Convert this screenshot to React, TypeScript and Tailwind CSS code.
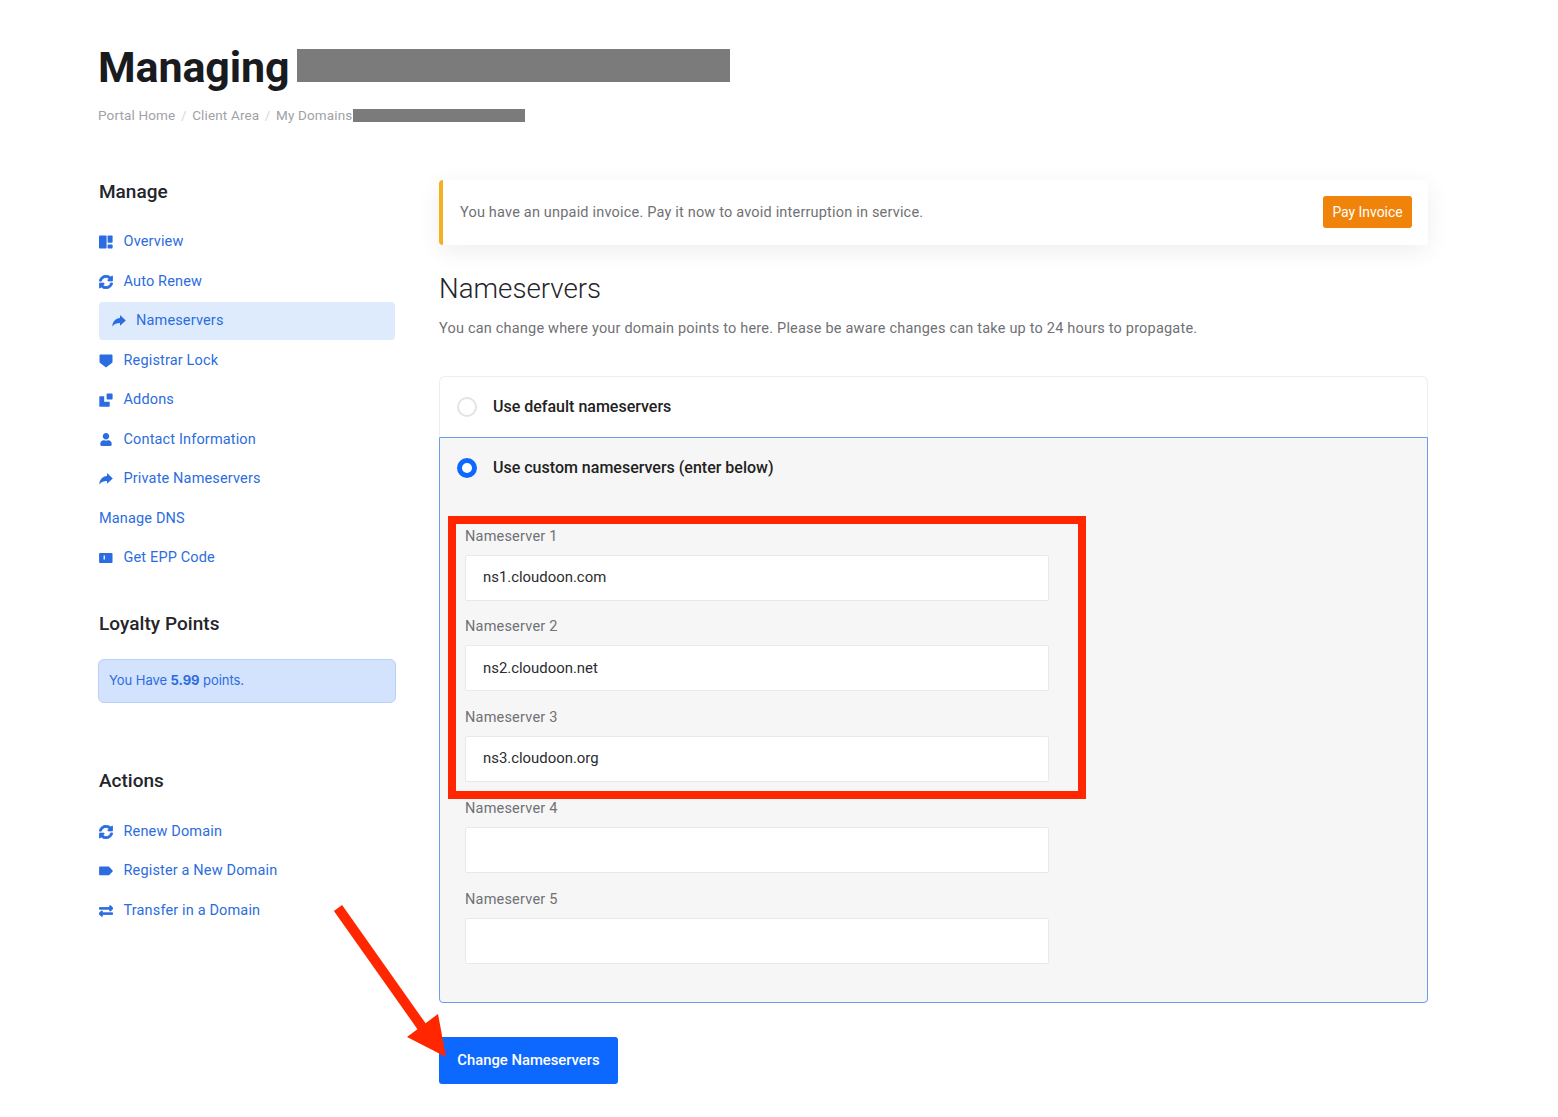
import React from "react";
import { FaSyncAlt, FaUser, FaExchangeAlt } from "react-icons/fa";

const Layout = () => (
  <svg viewBox="0 0 14 14" className="w-[14px] h-[14px]" fill="currentColor">
    <rect x="0" y="0.5" width="7.6" height="13" rx="0.8" />
    <rect x="8.6" y="0.5" width="5" height="7.2" rx="0.8" />
    <rect x="8.6" y="9.4" width="5" height="4.1" rx="0.8" />
  </svg>
);
const Share = () => (
  <svg viewBox="0 0 14 14" className="w-[14px] h-[14px]" fill="currentColor">
    <path d="M8 1 L13.8 6.4 L8 11.8 V8.9 C4.8 8.9 2.4 9.6 0.3 12.6 C0.5 7.2 3.6 4.200 8 3.900 Z" />
  </svg>
);
const Shield = () => (
  <svg viewBox="0 0 14 14" className="w-[14px] h-[14px]" fill="currentColor">
    <path d="M1.3 0.6h11.4c.5 0 .8.3.8.8v6.4c0 .5-.2.8-.6 1.1L7.3 13.3c-.2.1-.4.1-.6 0L1.1 8.9c-.4-.3-.6-.6-.6-1.1V1.4c0-.5.3-.8.8-.8z" />
  </svg>
);
const Addons = () => (
  <svg viewBox="0 0 14 14" className="w-[14px] h-[14px]" fill="currentColor">
    <path d="M.8 3.2h4.4v5.5h5.5v4.5c0 .3-.2.5-.5.5H.8c-.3 0-.5-.2-.5-.5V3.700c0-.3.2-.5.5-.5z" />
    <rect x="7.6" y="0.6" width="6" height="6" rx="0.8" />
  </svg>
);
const Card = () => (
  <svg viewBox="0 0 14 14" className="w-[14px] h-[14px]" fill="currentColor">
    <path fillRule="evenodd" d="M.8 2h12c.4 0 .7.3.7.7v8.600c0 .4-.3.7-.7.7H.8c-.4 0-.7-.3-.7-.7V2.700c0-.4.3-.7.7-.7zM4.600 4.600v3.800h1.300V4.600z" />
  </svg>
);
const Tag = () => (
  <svg viewBox="0 0 14 14" className="w-[14px] h-[14px]" fill="currentColor">
    <path d="M.8 2.600h8.800c.3 0 .5.1.7.3l3.300 3.500c.3.3.3.7 0 1l-3.300 3.500c-.2.2-.4.3-.7.3H.8c-.4 0-.7-.3-.7-.7V3.300c0-.4.3-.7.7-.7z" />
  </svg>
);

type Item = { label: string; icon?: React.ReactNode; active?: boolean };

const fa = "w-[14px] h-[14px] stroke-[30px]";
const manage: Item[] = [
  { label: "Overview", icon: <Layout /> },
  { label: "Auto Renew", icon: <FaSyncAlt className={fa} /> },
  { label: "Nameservers", icon: <Share />, active: true },
  { label: "Registrar Lock", icon: <Shield /> },
  { label: "Addons", icon: <Addons /> },
  { label: "Contact Information", icon: <FaUser className="w-[12px] h-[13px] ml-px" /> },
  { label: "Private Nameservers", icon: <Share /> },
  { label: "Manage DNS" },
  { label: "Get EPP Code", icon: <Card /> },
];
const actions: Item[] = [
  { label: "Renew Domain", icon: <FaSyncAlt className={fa} /> },
  { label: "Register a New Domain", icon: <Tag /> },
  { label: "Transfer in a Domain", icon: <FaExchangeAlt className={fa} /> },
];

function SideList({ items }: { items: Item[] }) {
  return (
    <ul>
      {items.map((it) => (
        <li key={it.label} className="h-[39.5px] flex items-center px-px">
          <a
            className={
              "flex items-center w-full text-[14.5px] text-[#2b6de0] tracking-[0.15px] " +
              (it.active ? "h-[38px] bg-[#deebfd] rounded-[4px] pl-[12.5px]" : "")
            }
          >
            {it.icon && <span className="w-[24.5px] shrink-0 flex items-center">{it.icon}</span>}
            <span>{it.label}</span>
          </a>
        </li>
      ))}
    </ul>
  );
}

function Radio({ on }: { on?: boolean }) {
  return on ? (
    <span className="w-[19.5px] h-[19.5px] rounded-full border-[5.5px] border-[#0d68ff] bg-white shrink-0" />
  ) : (
    <span className="w-[19.5px] h-[19.5px] rounded-full border-2 border-[#e3e3e3] bg-white shrink-0" />
  );
}

const servers = ["ns1.cloudoon.com", "ns2.cloudoon.net", "ns3.cloudoon.org", "", ""];

export default function App() {
  return (
    <div className="relative min-h-[1117px] bg-white pl-[98px] pr-[130px] pt-[40px] font-['Roboto','Liberation_Sans',sans-serif] text-[#222]">
      <header className="h-[140px]">
        <div className="flex items-center h-[54px] gap-[7px]">
          <h1 className="text-[43px] leading-[54px] font-bold text-[#191b1f] tracking-[-0.1px]">Managing</h1>
          <span className="w-[433px] h-[33px] bg-[#7b7b7b] mt-[-3px]" />
        </div>
        <nav className="flex items-center h-[20px] mt-[11px] text-[13.5px] text-[#a0a2a7] tracking-[0.15px]">
          <span>Portal Home</span>
          <span className="mx-[5.5px] text-[#d8d8d8]">/</span>
          <span>Client Area</span>
          <span className="mx-[5.5px] text-[#d8d8d8]">/</span>
          <span>My Domains</span>
          <span className="w-[172px] h-[13px] bg-[#7b7b7b] ml-[1px]" />
        </nav>
      </header>

      <div className="flex gap-[43px]">
        <aside className="w-[298px] shrink-0">
          <h2 className="h-[24px] leading-[24px] pl-px text-[19px] font-medium text-[#23252a] mb-[18.5px]">Manage</h2>
          <SideList items={manage} />
          <h2 className="h-[24px] leading-[24px] pl-px text-[19px] tracking-[0.05px] font-medium text-[#23252a] mt-[34px] mb-[23px]">Loyalty Points</h2>
          <div className="h-[44px] flex items-center px-[10px] bg-[#d3e2fd] border border-[#b9d0f8] rounded-[6px] text-[13px] text-[#2b6de0] font-['Inter',sans-serif] tracking-[-0.05px]">
            <span>
              You Have <b className="font-bold">5.99</b> points.
            </span>
          </div>
          <h2 className="h-[24px] leading-[24px] pl-px text-[19px] font-medium text-[#23252a] mt-[66px] mb-[19px]">Actions</h2>
          <SideList items={actions} />
        </aside>

        <main className="w-[989px] relative">
          <div className="h-[65px] flex items-center justify-between pl-[17px] pr-[16px] bg-white border-l-[4px] border-[#f5b01f] rounded-[4px] shadow-[0_6px_24px_rgba(0,0,0,0.07)]">
            <p className="text-[14.5px] text-[#6f7175] tracking-[0.19px]">
              You have an unpaid invoice. Pay it now to avoid interruption in service.
            </p>
            <button className="h-[32px] w-[89px] mt-[-1px] mb-px pt-px rounded-[3px] bg-[#f0830a] text-white text-[13.9px]">Pay Invoice</button>
          </div>

          <h2 className="mt-[24px] h-[40px] leading-[40px] text-[27.7px] font-light text-[#23252a]">Nameservers</h2>
          <p className="mt-[8px] h-[24px] leading-[24px] text-[14.5px] text-[#6f7175] tracking-[0.2px]">
            You can change where your domain points to here. Please be aware changes can take up to 24 hours to propagate.
          </p>

          <div className="mt-[35px] relative">
            <div className="h-[61px] flex items-center gap-[16.5px] pl-[17px] bg-white border border-b-0 border-[#eeeeee] rounded-t-[6px] text-[16px] font-medium">
              <Radio />
              <span>Use default nameservers</span>
            </div>
            <div className="bg-[#f6f6f6] border border-[#6d9ceb] rounded-b-[4px] pl-[25px] pb-[38px]">
              <div className="h-[60px] flex items-center gap-[16.5px] pl-[17px] ml-[-25px] text-[16px] font-medium">
                <Radio on />
                <span>Use custom nameservers (enter below)</span>
              </div>
              <div className="mt-[28.5px] w-[584px] flex flex-col gap-[16.75px]">
                {servers.map((v, i) => (
                  <div key={i}>
                    <label className="block h-[20px] leading-[20px] mb-[8px] text-[14.5px] text-[#6f7175] tracking-[0.2px]">
                      Nameserver {i + 1}
                    </label>
                    <div className="h-[46px] flex items-center pl-[17px] pb-px bg-white border border-[#e9e9e9] rounded-[2px] text-[14.9px] text-[#2a2c30]">
                      {v}
                    </div>
                  </div>
                ))}
              </div>
            </div>
            <div className="absolute left-[9px] top-[140px] w-[638px] h-[283px] border-[8px] border-[#ff2600] pointer-events-none" />
          </div>

          <button className="mt-[34px] block w-[179px] h-[47px] rounded-[3px] bg-[#0d68ff] text-white text-[14.8px] font-medium">
            Change Nameservers
          </button>

          <svg className="absolute left-[-109px] top-[724px] pointer-events-none" width="120" height="156" viewBox="0 0 120 156" aria-hidden="true">
            <path d="M8 4 L97 130" stroke="#ff2600" strokeWidth="10" />
            <polygon points="108,110 116,153 77,133" fill="#ff2600" />
          </svg>
        </main>
      </div>
    </div>
  );
}
